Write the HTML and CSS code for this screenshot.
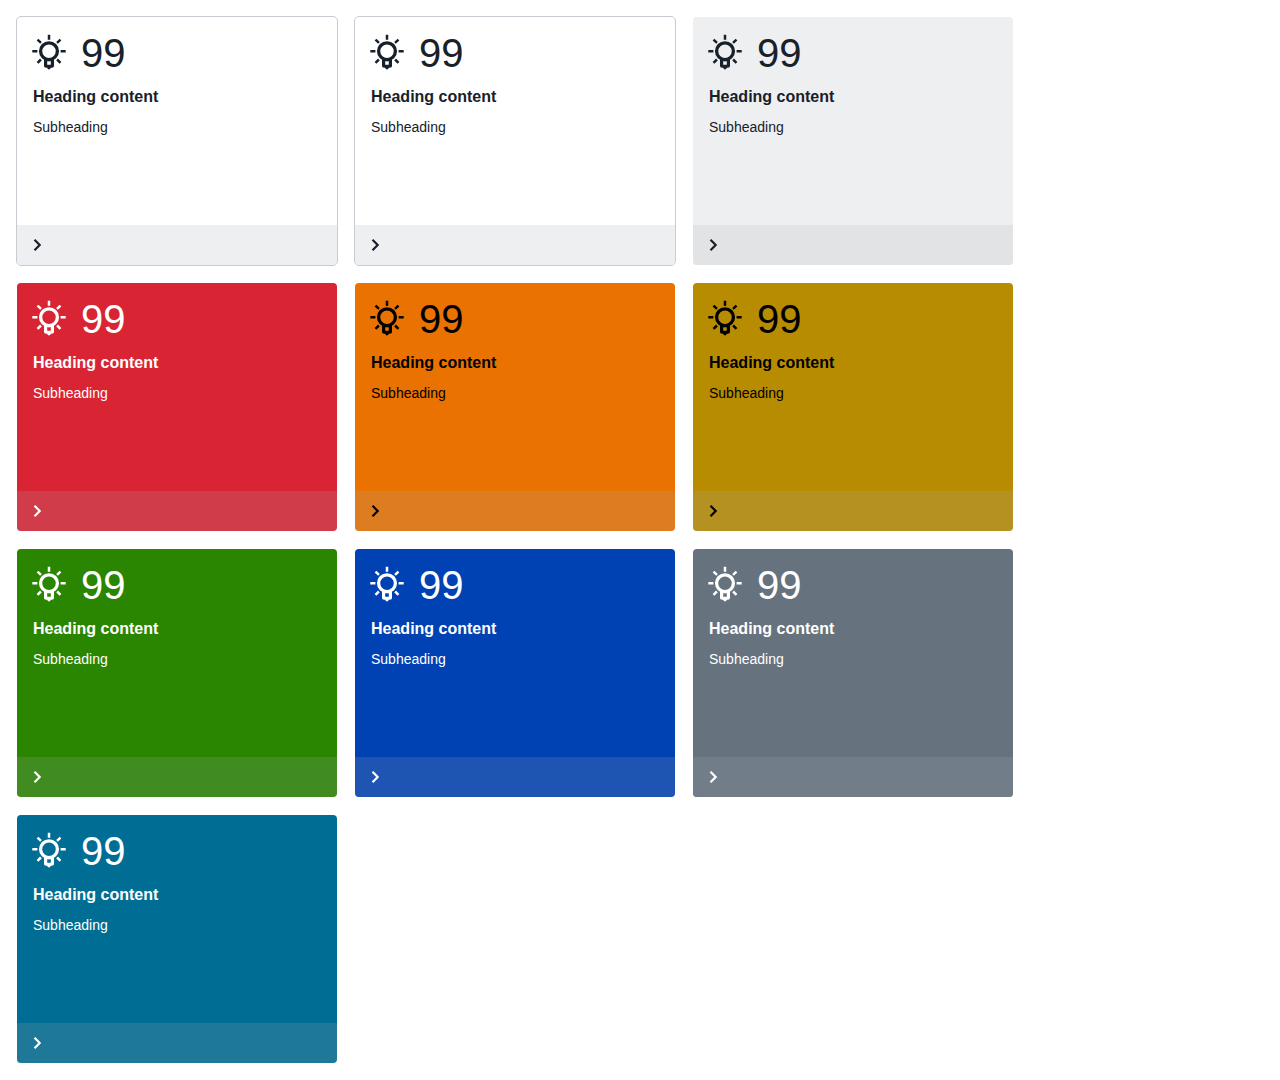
FILE: index.html
```
<!DOCTYPE html>
<html lang="en">
<head>
<meta charset="utf-8">
<title>Cards</title>
<link rel="stylesheet" href="styles.css">
</head>
<body>
<svg class="symbols" width="0" height="0" aria-hidden="true">
  <symbol id="bulb" viewBox="0 0 36 36">
    <circle cx="18" cy="17.2" r="8.4" fill="none" stroke="currentColor" stroke-width="3.3"/>
    <path d="M18 .8v5M1.3 17.2h5.1M29.6 17.2h5.1M6.5 5.7l3.5 3.2M29.5 5.7l-3.5 3.2M6.5 28.8l3.4-3.3M29.5 28.8l-3.4-3.3" fill="none" stroke="currentColor" stroke-width="2.5"/>
    <path fill="currentColor" fill-rule="evenodd" d="M13 24h10v7.6c0 1.4-.8 2.2-2.2 2.2h-1c-.4 1-1 1.6-1.8 1.6s-1.4-.6-1.8-1.6h-1c-1.4 0-2.2-.8-2.2-2.2zM16.2 27.2v3.5h3.6v-3.5z"/>
  </symbol>
  <symbol id="chevron" viewBox="0 0 10 14">
    <path d="M1.5 1.7l5.2 5.3-5.2 5.3" fill="none" stroke="currentColor" stroke-width="2.2"/>
  </symbol>
</svg>
<main class="cards">
  <article class="card outlined"><div class="body"><div class="top"><svg class="bulb"><use href="#bulb"/></svg><span class="count">99</span></div><h2>Heading content</h2><p>Subheading</p></div><footer><svg class="chevron"><use href="#chevron"/></svg></footer></article>
  <article class="card outlined"><div class="body"><div class="top"><svg class="bulb"><use href="#bulb"/></svg><span class="count">99</span></div><h2>Heading content</h2><p>Subheading</p></div><footer><svg class="chevron"><use href="#chevron"/></svg></footer></article>
  <article class="card light"><div class="body"><div class="top"><svg class="bulb"><use href="#bulb"/></svg><span class="count">99</span></div><h2>Heading content</h2><p>Subheading</p></div><footer><svg class="chevron"><use href="#chevron"/></svg></footer></article>
  <article class="card red"><div class="body"><div class="top"><svg class="bulb"><use href="#bulb"/></svg><span class="count">99</span></div><h2>Heading content</h2><p>Subheading</p></div><footer><svg class="chevron"><use href="#chevron"/></svg></footer></article>
  <article class="card orange"><div class="body"><div class="top"><svg class="bulb"><use href="#bulb"/></svg><span class="count">99</span></div><h2>Heading content</h2><p>Subheading</p></div><footer><svg class="chevron"><use href="#chevron"/></svg></footer></article>
  <article class="card yellow"><div class="body"><div class="top"><svg class="bulb"><use href="#bulb"/></svg><span class="count">99</span></div><h2>Heading content</h2><p>Subheading</p></div><footer><svg class="chevron"><use href="#chevron"/></svg></footer></article>
  <article class="card green"><div class="body"><div class="top"><svg class="bulb"><use href="#bulb"/></svg><span class="count">99</span></div><h2>Heading content</h2><p>Subheading</p></div><footer><svg class="chevron"><use href="#chevron"/></svg></footer></article>
  <article class="card blue"><div class="body"><div class="top"><svg class="bulb"><use href="#bulb"/></svg><span class="count">99</span></div><h2>Heading content</h2><p>Subheading</p></div><footer><svg class="chevron"><use href="#chevron"/></svg></footer></article>
  <article class="card gray"><div class="body"><div class="top"><svg class="bulb"><use href="#bulb"/></svg><span class="count">99</span></div><h2>Heading content</h2><p>Subheading</p></div><footer><svg class="chevron"><use href="#chevron"/></svg></footer></article>
  <article class="card teal"><div class="body"><div class="top"><svg class="bulb"><use href="#bulb"/></svg><span class="count">99</span></div><h2>Heading content</h2><p>Subheading</p></div><footer><svg class="chevron"><use href="#chevron"/></svg></footer></article>
</main>
</body>
</html>
```
FILE: styles.css
```
* { box-sizing: border-box; }
body {
  margin: 0;
  background: #fff;
  font-family: "Liberation Sans", Arial, sans-serif;
}
.symbols { display: none; }
.cards {
  display: grid;
  grid-template-columns: repeat(3, 322px);
  grid-auto-rows: 250px;
  gap: 16px;
  padding: 16px;
}
.card {
  display: flex;
  flex-direction: column;
  border: 1px solid transparent;
  border-radius: 5px;
  background-clip: padding-box;
  overflow: hidden;
  color: #fff;
}
.body { flex: 1; padding: 16px; }
.top {
  display: flex;
  align-items: center;
  height: 40px;
  gap: 14px;
  margin-left: -2px;
}
.bulb { display: block; width: 36px; height: 36px; margin-bottom: 2px; }
.count { font-size: 40px; line-height: 40px; }
h2 {
  margin: 12px 0 0;
  font-size: 16px;
  line-height: 24px;
  font-weight: 700;
}
p {
  margin: 8px 0 0;
  font-size: 14px;
  line-height: 20px;
}
footer {
  display: flex;
  align-items: center;
  height: 40px;
  padding-left: 16px;
  background: rgba(165, 170, 180, .18);
}
.chevron { display: block; width: 10px; height: 14px; }
.outlined { background-color: #fff; border-color: #c8cbd2; color: #18202a; }
.outlined footer { background: #eeeff1; }
.light { background-color: #eeeff1; color: #18202a; }
.light footer { background: #e2e3e5; }
.red { background-color: #d92433; }
.orange { background-color: #e97200; color: #000; }
.yellow { background-color: #b88c00; color: #000; }
.green { background-color: #2a8500; }
.blue { background-color: #0041b3; }
.gray { background-color: #66727d; }
.teal { background-color: #006e94; }
.gray footer { background: #717d88; }
```
